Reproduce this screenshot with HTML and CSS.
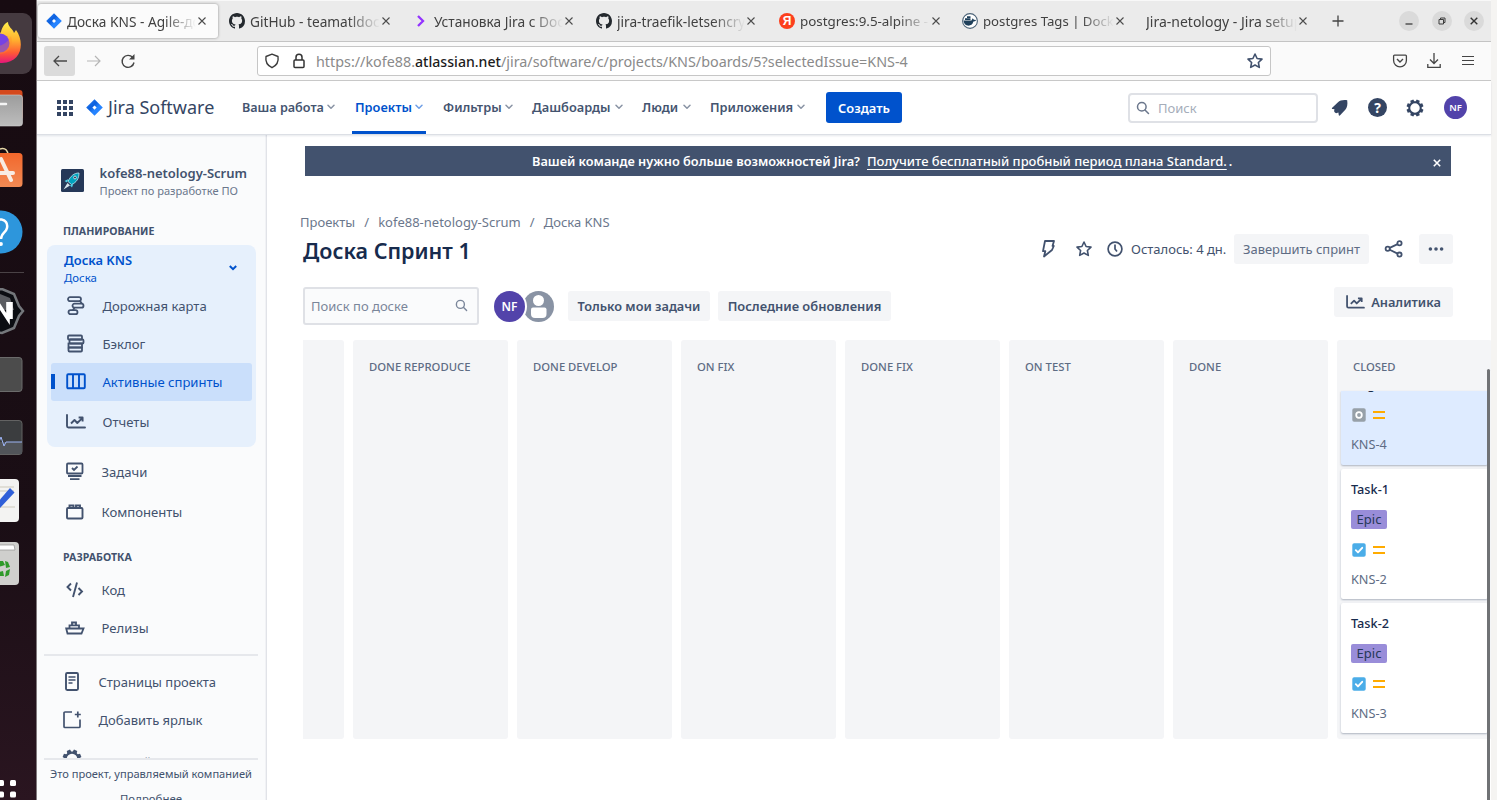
FILE: index.html
```html
<!DOCTYPE html>
<html lang="ru">
<head>
<meta charset="utf-8">
<title>Доска KNS - Agile-доска - Jira</title>
<link rel="stylesheet" href="styles.css">
</head>
<body>
<svg class="defs" width="0" height="0" aria-hidden="true">
  <defs>
    <linearGradient id="flame" x1="0" y1="0" x2="0" y2="1"><stop offset="0" stop-color="#fff04a"/><stop offset=".45" stop-color="#ffae2e"/><stop offset=".75" stop-color="#ff5a35"/><stop offset="1" stop-color="#e6157b"/></linearGradient>
    <linearGradient id="grey" x1="0" y1="0" x2="0" y2="1"><stop offset="0" stop-color="#9c9c9c"/><stop offset="1" stop-color="#bdbdbd"/></linearGradient>
    <linearGradient id="orange" x1="0" y1="0" x2="0" y2="1"><stop offset="0" stop-color="#f2672c"/><stop offset="1" stop-color="#f28a54"/></linearGradient>
    <linearGradient id="jira" x1="0" y1="0" x2="1" y2="1"><stop offset="0" stop-color="#2684ff"/><stop offset=".4" stop-color="#0d5fdc"/><stop offset=".6" stop-color="#2684ff"/></linearGradient>
  </defs>
  <symbol id="i-x" viewBox="0 0 10 10"><path d="M1.500 1.500l7 7M8.500 1.500l-7 7" fill="none" stroke="currentColor" stroke-width="1.100"/></symbol>
  <symbol id="i-down" viewBox="0 0 8 6"><path d="M1 1.200l3 3 3-3" fill="none" stroke="currentColor" stroke-width="1.500" stroke-linecap="round" stroke-linejoin="round"/></symbol>
  <symbol id="i-jira" viewBox="0 0 16 16"><path d="M8 .2L15.800 8 8 15.800.2 8z" fill="url(#jira)"/><path d="M8 6L10 8 8 10 6 8z" fill="#fff"/></symbol>
  <symbol id="i-github" viewBox="0 0 16 16"><path fill="#24292e" d="M8 0C3.580 0 0 3.580 0 8c0 3.540 2.290 6.530 5.470 7.590.4.070.55-.17.55-.38 0-.19-.01-.82-.01-1.490-2.010.37-2.530-.49-2.690-.94-.09-.23-.48-.94-.82-1.130-.28-.15-.68-.52-.01-.53.63-.01 1.080.58 1.230.82.72 1.210 1.870.87 2.330.66.070-.52.28-.87.51-1.070-1.780-.2-3.640-.89-3.640-3.950 0-.87.31-1.590.82-2.150-.08-.2-.36-1.020.08-2.120 0 0 .67-.21 2.200.82.64-.18 1.320-.27 2-.27s1.360.09 2 .27c1.530-1.040 2.200-.82 2.200-.82.44 1.100.16 1.920.08 2.120.51.56.82 1.270.82 2.150 0 3.070-1.870 3.750-3.650 3.950.29.25.54.73.54 1.480 0 1.070-.01 1.930-.01 2.200 0 .21.15.46.55.38A8.010 8.010 0 0 0 16 8c0-4.420-3.580-8-8-8z"/></symbol>
  <symbol id="i-search" viewBox="0 0 14 14"><circle cx="5.800" cy="5.800" r="4.300" fill="none" stroke="currentColor" stroke-width="1.500"/><path d="M9 9l3.500 3.500" stroke="currentColor" stroke-width="1.500" stroke-linecap="round"/></symbol>
  <symbol id="i-gear" viewBox="0 0 18 18"><circle cx="9" cy="9" r="5.700" fill="none" stroke="currentColor" stroke-width="1.900"/><g fill="currentColor"><path id="tooth" d="M7.400.5h3.200l.5 3H6.900z" transform="rotate(22.500 9 9)"/><use href="#tooth" transform="rotate(45 9 9)"/><use href="#tooth" transform="rotate(90 9 9)"/><use href="#tooth" transform="rotate(135 9 9)"/><use href="#tooth" transform="rotate(180 9 9)"/><use href="#tooth" transform="rotate(225 9 9)"/><use href="#tooth" transform="rotate(270 9 9)"/><use href="#tooth" transform="rotate(315 9 9)"/></g></symbol>
  <symbol id="i-star" viewBox="0 0 18 18"><path d="M9 2l2.100 4.500 4.900.6-3.600 3.400.9 4.900L9 13l-4.300 2.400.9-4.900L2 7.100l4.900-.6z" fill="none" stroke="currentColor" stroke-width="1.600" stroke-linejoin="round"/></symbol>
  <symbol id="i-chart" viewBox="0 0 20 16"><path d="M1 1v11a1.500 1.500 0 0 0 1.500 1.500H19" fill="none" stroke="currentColor" stroke-width="1.900" stroke-linecap="round"/><path d="M5 9.500L8.500 6l2.800 3L16 4.300M12.600 3.500h4v4" fill="none" stroke="currentColor" stroke-width="1.900" stroke-linejoin="round"/></symbol>
  <symbol id="i-done" viewBox="0 0 14 14"><rect x=".3" y=".3" width="13.400" height="13.400" rx="1.800" fill="#4bade8"/><path d="M3.800 7.200l2.200 2.200 4.200-4.600" fill="none" stroke="#fff" stroke-width="1.900" stroke-linecap="round" stroke-linejoin="round"/></symbol>
</svg>

<div class="screen">
  <aside class="dock">
    <svg class="d-fox" width="37" height="61" viewBox="0 0 37 61"><rect x="-20" y="0" width="52" height="61" rx="9" fill="#453a40"/><path d="M-14 31C-8 16 0 22 1 19 2 14 5 10 8 9c0 5 5 7 6 11l2-3c9 12 6 33-14 33S-18 40-14 31z" fill="url(#flame)"/><circle cx="0" cy="30" r="9.500" fill="#7542e5"/><path d="M-9 27c4 8 13 8 20-4 3 9-2 18-12 18z" fill="#ff8a2b" opacity=".3"/></svg>
    <svg class="d-files" width="37" height="38" viewBox="0 0 37 38"><rect x="-10" y="0" width="32.500" height="30" rx="3" fill="#d5491d"/><rect x="-10" y="5" width="32.500" height="31" rx="3" fill="url(#grey)" stroke="#d0d0d0" stroke-width=".6"/><path d="M-2 14H6" stroke="#f4f4f4" stroke-width="2.500" stroke-linecap="round"/></svg>
    <svg class="d-soft" width="37" height="42" viewBox="0 0 37 42"><path d="M-3 8C-3-.5 8-1 8 8" fill="none" stroke="#e6d8a8" stroke-width="1.500"/><rect x="-10" y="6" width="32.500" height="34" rx="3.500" fill="url(#orange)"/><path d="M1 12L11 33M-5 26H13" stroke="#f8ece4" stroke-width="4" stroke-linecap="round"/></svg>
    <svg class="d-help" width="37" height="44" viewBox="0 0 37 44"><circle cx="1" cy="22" r="21.500" fill="#2d96dc"/><path d="M-6 16C-5 6 9 8 7 18c-1 5-6 5-6 11" fill="none" stroke="#fff" stroke-width="2.500"/><circle cx="1" cy="34" r="1.900" fill="#fff"/></svg>
    <div class="d-line"></div>
    <svg class="d-hex" width="37" height="48" viewBox="0 0 37 48"><path d="M-8 2L2 1l12 5 5 12 4 5-4 5-5 12-12 5-10-1z" fill="#0b0d12" stroke="#74777b" stroke-width="2.500"/><path d="M0 6l10 4 4 12H0z" fill="#5a5c61"/><path d="M-3 14L8 31V14M11 14v17" fill="none" stroke="#fff" stroke-width="3.600"/></svg>
    <svg class="d-box" width="37" height="36" viewBox="0 0 37 36"><rect x="-10" y=".5" width="32" height="34" rx="3" fill="#4c4c4c" stroke="#6b6b6b"/></svg>
    <svg class="d-mon" width="37" height="36" viewBox="0 0 37 36"><rect x="-10" y=".5" width="32" height="34" rx="3" fill="#3b3d3f" stroke="#636363"/><path d="M-10 22H22V34H-10z" fill="#515459"/><path d="M-1 22l2-5 3 9 2-4h16" fill="none" stroke="#9db4f5" stroke-width="1"/></svg>
    <svg class="d-edit" width="37" height="44" viewBox="0 0 37 44"><rect x="-10" y="0" width="29" height="43" rx="4" fill="#f3f3f2"/><path d="M-1 8H14M-1 12H14M0 28H15" stroke="#cdc9bb"/><path d="M-3 24L10 9l4.500 4.500L0 29z" fill="#2f5fd8"/></svg>
    <svg class="d-trash" width="37" height="44" viewBox="0 0 37 44"><rect x="-10" y="0" width="29" height="43" rx="4" fill="#cfcfcd"/><path d="M-2 3H14L15 8H-2z" fill="#fff" stroke="#8f8f8f" stroke-width=".7"/><g fill="#2f9a2a"><path d="M-2 19h5l2 4-3 1-4 1zM5 19l3 1 2 5-4 1zM-1 30l4-1 1 5h-5zM6 29l4-2-1 6-4 2z"/></g></svg>
    <svg class="d-apps" width="37" height="22" viewBox="0 0 37 22"><g fill="#fff"><rect x="-2" y="1" width="6" height="6" rx="1.500"/><rect x="10" y="1" width="6" height="6" rx="1.500"/><rect x="-2" y="12.500" width="6" height="6" rx="1.500"/><rect x="10" y="12.500" width="6" height="6" rx="1.500"/></g></svg>
  </aside>

  <div class="browser">
    <div class="tabs">
      <div class="tab t1 active"><svg width="16" height="16"><use href="#i-jira"/></svg><span class="tt">Доска KNS - Agile-доска</span><svg class="x" width="10" height="10"><use href="#i-x"/></svg></div>
      <div class="tab t2"><svg width="16" height="16"><use href="#i-github"/></svg><span class="tt">GitHub - teamatldocker</span><svg class="x" width="10" height="10"><use href="#i-x"/></svg></div>
      <div class="tab t3"><svg width="16" height="16" viewBox="0 0 16 16"><path d="M5 3l5 5-5 5" fill="none" stroke="#9333ff" stroke-width="2.300"/></svg><span class="tt">Установка Jira с Docker</span><svg class="x" width="10" height="10"><use href="#i-x"/></svg></div>
      <div class="tab t4"><svg width="16" height="16"><use href="#i-github"/></svg><span class="tt">jira-traefik-letsencrypt</span><svg class="x" width="10" height="10"><use href="#i-x"/></svg></div>
      <div class="tab t5"><span class="ya">Я</span><span class="tt">postgres:9.5-alpine - D</span><svg class="x" width="10" height="10"><use href="#i-x"/></svg></div>
      <div class="tab t6"><svg width="16" height="16" viewBox="0 0 16 16"><circle cx="8" cy="8" r="7.400" fill="#fff" stroke="#4d6478" stroke-width="1.100"/><path d="M1.500 7.500h8l1.200-2.200 1.200 1.500 2.300.2c-1.200 1.500-2 1.600-2.800 1.600C10.500 12 8 13 5.500 12.600 3 12.200 1.700 10 1.500 7.500zM3 5.300h5.500v1.700H3zM5 3.300h3.500v1.700H5z" fill="#1f405b"/></svg><span class="tt">postgres Tags | Docker</span><svg class="x" width="10" height="10"><use href="#i-x"/></svg></div>
      <div class="tab t7"><span class="tt">Jira-netology - Jira setup</span><svg class="x" width="10" height="10"><use href="#i-x"/></svg></div>
      <svg class="plus" width="12" height="12" viewBox="0 0 12 12"><path d="M6 .5v11M.5 6h11" stroke="#444" stroke-width="1.300"/></svg>
      <div class="win"><svg width="20" height="20" viewBox="0 0 20 20"><path d="M6.500 13h7" stroke="#3d3d3d" stroke-width="1.300"/></svg></div>
      <div class="win"><svg width="20" height="20" viewBox="0 0 20 20"><path d="M7 8.500h4.500V13H7zM8.500 8V7H13v4.500h-1" fill="none" stroke="#3d3d3d"/></svg></div>
      <div class="win"><svg width="20" height="20" viewBox="0 0 20 20"><path d="M6.700 6.700l6.600 6.600M13.300 6.700l-6.600 6.600" stroke="#333" stroke-width="1.400"/></svg></div>
    </div>

    <div class="toolbar">
      <div class="back"><svg width="14" height="12" viewBox="0 0 14 12"><path d="M6 1L1 6l5 5M1 6h13" fill="none" stroke="#4a4a4a" stroke-width="1.300"/></svg></div>
      <svg class="fwd" width="14" height="12" viewBox="0 0 14 12"><path d="M8 1l5 5-5 5M13 6H0" fill="none" stroke="#b5b5b5" stroke-width="1.200"/></svg>
      <svg class="reload" width="16" height="16" viewBox="0 0 16 16"><path d="M14 9.500A6 6 0 1 1 12.700 4.500" fill="none" stroke="#444" stroke-width="1.400"/><path d="M14.500 1v5.500H9z" fill="#444"/></svg>
      <div class="url">
        <svg width="16" height="16" viewBox="0 0 16 16"><path d="M8 1.200l6 2.300c.8 5-1.500 9-6 11.200C3.500 12.500 1.200 8.500 2 3.500z" fill="none" stroke="#3c3c3c" stroke-width="1.400" stroke-linejoin="round"/></svg>
        <svg class="lock" width="14" height="16" viewBox="0 0 14 16"><rect x="2" y="7" width="10" height="7.500" rx="1" fill="none" stroke="#333" stroke-width="1.500"/><path d="M4 7V4.300a3 3 0 0 1 6 0V7" fill="none" stroke="#333" stroke-width="1.500"/></svg>
        <div class="addr"><span>https://kofe88.</span><b>atlassian.net</b><span>/jira/software/c/projects/KNS/boards/5?selectedIssue=KNS-4</span></div>
        <svg class="fav" width="18" height="18"><use href="#i-star"/></svg>
      </div>
      <svg class="pocket" width="16" height="16" viewBox="0 0 16 16"><path d="M2.500 2.200h11a.9.9 0 0 1 .9.9V7.500a6.400 6.400 0 0 1-12.800 0V3.100a.9.9 0 0 1 .9-.9z" fill="none" stroke="#444" stroke-width="1.300"/><path d="M5 6l3 3 3-3" fill="none" stroke="#444" stroke-width="1.400"/></svg>
      <svg class="dl" width="14" height="16" viewBox="0 0 14 16"><path d="M7 0v10M3 6.500l4 4 4-4M.8 11v3.300h12.400V11" fill="none" stroke="#444" stroke-width="1.300"/></svg>
      <svg class="menu" width="12" height="12" viewBox="0 0 12 12"><path d="M0 1.500h12M0 5.500h12M0 9.500h12" stroke="#444" stroke-width="1.200"/></svg>
    </div>

    <header class="top">
      <svg class="grid9" width="16" height="16" viewBox="0 0 16 16" fill="#344563"><path d="M0 0h4v4H0zM6 0h4v4H6zM12 0h4v4h-4zM0 6h4v4H0zM6 6h4v4H6zM12 6h4v4h-4zM0 12h4v4H0zM6 12h4v4H6zM12 12h4v4h-4z"/></svg>
      <svg class="logo" width="17" height="17"><use href="#i-jira"/></svg>
      <span class="brand">Jira Software</span>
      <nav class="nav">
        <a class="n1">Ваша работа<svg width="8" height="6"><use href="#i-down"/></svg></a>
        <a class="n2 on">Проекты<svg width="8" height="6"><use href="#i-down"/></svg></a>
        <a class="n3">Фильтры<svg width="8" height="6"><use href="#i-down"/></svg></a>
        <a class="n4">Дашбоарды<svg width="8" height="6"><use href="#i-down"/></svg></a>
        <a class="n5">Люди<svg width="8" height="6"><use href="#i-down"/></svg></a>
        <a class="n6">Приложения<svg width="8" height="6"><use href="#i-down"/></svg></a>
      </nav>
      <button class="create">Создать</button>
      <div class="search"><svg width="14" height="14"><use href="#i-search"/></svg>Поиск</div>
      <svg class="bell" width="18" height="18" viewBox="0 0 18 18"><path d="M16.200 1.300c-4-.6-7.400.2-9.200 2L1.200 8.700c-.7.700-.3 1.300.6 1.400l1.700.2c-.8 1.600-.3 3.400 1.600 4l2.300-.7.3 2.100c.1 1 .8 1.200 1.400.6l5.200-5.600c1.900-2 2.500-5.400 1.900-9.400z" fill="#344563"/></svg>
      <div class="help">?</div>
      <svg class="cog" width="18" height="18"><use href="#i-gear"/></svg>
      <div class="ava small">NF</div>
    </header>

    <div class="body">
      <aside class="side">
        <div class="scroll">
          <div class="proj">
            <svg width="23" height="23" viewBox="0 0 23 23"><rect width="23" height="23" rx="1.500" fill="#253858"/><path d="M18 4c-5 0-8.500 3-11 8.500L10.500 15.500C15.500 13.500 18 9.500 18 4z" fill="#00a3bf" stroke="#c1e9f2" stroke-width=".8"/><path d="M7.500 10l-4 2 2.500 1.500M12.500 14.500l-1.500 4L9 16.500z" fill="#4dd0e6"/><path d="M6.500 14l-4 6.500L9 16.500z" fill="#d5e4ec"/><circle cx="14" cy="8.500" r="1.400" fill="#253858" stroke="#fff" stroke-width=".7"/></svg>
            <div><div class="pname">kofe88-netology-Scrum</div><div class="psub">Проект по разработке ПО</div></div>
          </div>
          <h3 class="sec">ПЛАНИРОВАНИЕ</h3>
          <div class="group">
            <div class="ghead"><div><b>Доска KNS</b><span>Доска</span></div><svg width="10" height="8" viewBox="0 0 10 8"><path d="M1.800 2L5 5.200 8.200 2" fill="none" stroke="#0052cc" stroke-width="2"/></svg></div>
            <a class="item"><svg width="20" height="20" viewBox="0 0 20 20" fill="none" stroke="currentColor" stroke-width="1.800"><rect x="2" y="1.200" width="13" height="4" rx="2"/><rect x="6.500" y="7.700" width="11" height="4" rx="2"/><rect x="2.500" y="14.200" width="9" height="4" rx="2"/><path d="M14 5l2 2.700M8.500 11.500L7 14.200"/></svg>Дорожная карта</a>
            <a class="item"><svg width="20" height="20" viewBox="0 0 20 20" fill="none" stroke="currentColor" stroke-width="1.800"><rect x="2" y="1.500" width="14" height="4" rx="1"/><rect x="3.500" y="5.500" width="14" height="4" rx="1"/><rect x="2.500" y="9.500" width="13.500" height="4"/><rect x="2.500" y="13.500" width="13.500" height="4" rx="1"/></svg>Бэклог</a>
            <a class="item sel"><svg width="20" height="20" viewBox="0 0 20 20" fill="none" stroke="currentColor" stroke-width="1.900"><rect x="1.200" y="2.300" width="17.600" height="14" rx="1"/><path d="M7 2.500v14M13 2.500v14"/></svg>Активные спринты</a>
            <a class="item rep"><svg width="20" height="16"><use href="#i-chart"/></svg>Отчеты</a>
          </div>
          <a class="item out tasks"><svg width="20" height="20" viewBox="0 0 20 20" fill="none" stroke="currentColor" stroke-width="1.800"><rect x="2" y="1.500" width="15.500" height="10" rx="1"/><path d="M7 6l2 2L12.500 4.500M3 14h13.500M5 17.200h9.500"/></svg>Задачи</a>
          <a class="item out comp"><svg width="20" height="20" viewBox="0 0 20 20" fill="none" stroke="currentColor" stroke-width="1.900"><rect x="2" y="6" width="15.500" height="10.500" rx="1"/><path d="M4.500 6V3.500h4V6M11 6V3.500h4V6"/></svg>Компоненты</a>
          <h3 class="sec dev">РАЗРАБОТКА</h3>
          <a class="item out"><svg width="20" height="20" viewBox="0 0 20 20" fill="none" stroke="currentColor" stroke-width="1.900"><path d="M6 3.500L2.500 7 6 10.500M13.500 8l3.500 3.500-3.500 3.500M12 2.500L8 17"/></svg>Код</a>
          <a class="item out"><svg width="20" height="20" viewBox="0 0 20 20" fill="none" stroke="currentColor" stroke-width="1.800"><path d="M1.200 10.500h17.300l-2 5H2.500zM4.500 10V7.300h9.500V10M7 7V4.500h4V7"/></svg>Релизы</a>
          <div class="rule"></div>
          <a class="item out pg"><svg width="20" height="20" viewBox="0 0 20 20" fill="none" stroke="currentColor" stroke-width="1.900"><rect x="4" y="1" width="12" height="17" rx="1.200"/><path d="M6.500 5h7M6.500 8h7M6.500 11h4" stroke-width="1.600"/></svg>Страницы проекта</a>
          <a class="item out pg"><svg width="20" height="20" viewBox="0 0 20 20" fill="none" stroke="currentColor" stroke-width="1.700"><path d="M10 2H3a1 1 0 0 0-1 1V16.500a1 1 0 0 0 1 1h14a1 1 0 0 0 1-1V9.500M15.800 1.500v6M12.800 4.500h6"/></svg>Добавить ярлык</a>
          <a class="item out pg set"><svg width="20" height="20" viewBox="0 0 18 18"><use href="#i-gear"/></svg><span>Настройки проекта</span></a>
        </div>
        <div class="foot"><div>Это проект, управляемый компанией</div><div class="more">Подробнее</div></div>
      </aside>

      <main class="main">
        <div class="banner"><span class="b1">Вашей команде нужно больше возможностей Jira?</span><a>Получите бесплатный пробный период плана Standard.</a><span class="dot">.</span><svg width="10" height="10" viewBox="0 0 10 10"><path d="M1.800 1.800l6.400 6.400M8.200 1.800l-6.400 6.400" stroke="#fff" stroke-width="1.600"/></svg></div>
        <div class="crumbs"><span class="c1">Проекты</span><i>/</i><span class="c2">kofe88-netology-Scrum</span><i>/</i><span>Доска KNS</span></div>
        <div class="titlebar">
          <h1>Доска Спринт 1</h1>
          <svg class="bolt" width="16" height="20" viewBox="0 0 16 20"><path d="M5 2h9l-1.500 5h1.300L12 11 4 17.500l1.300-5.300H3z" fill="none" stroke="currentColor" stroke-width="1.800" stroke-linejoin="round"/></svg>
          <svg class="star" width="18" height="18"><use href="#i-star"/></svg>
          <svg class="clock" width="16" height="16" viewBox="0 0 16 16" fill="none" stroke="currentColor" stroke-width="1.700"><circle cx="8" cy="8" r="6.900"/><path d="M8 3.500V8l2 2.500"/></svg>
          <span class="left">Осталось: 4 дн.</span>
          <button class="btn finish">Завершить спринт</button>
          <svg class="share" width="20" height="18" viewBox="0 0 20 18" fill="none" stroke="currentColor" stroke-width="1.800"><circle cx="3.700" cy="8.800" r="2.100"/><circle cx="15.500" cy="3.200" r="2.100"/><circle cx="15.500" cy="14.600" r="2.100"/><path d="M5.700 7.900l7.900-3.800M5.700 9.800l7.900 3.800"/></svg>
          <button class="btn dots"><svg width="16" height="6" viewBox="0 0 16 6" fill="#44546f"><circle cx="2.400" cy="3" r="1.800"/><circle cx="8" cy="3" r="1.800"/><circle cx="13.600" cy="3" r="1.800"/></svg></button>
        </div>
        <div class="filters">
          <div class="find">Поиск по доске<svg width="13" height="13" viewBox="0 0 14 14"><use href="#i-search"/></svg></div>
          <div class="ava big">NF</div>
          <svg class="anon" width="31" height="31" viewBox="0 0 31 31"><circle cx="15.500" cy="15.500" r="15.500" fill="#8993a4"/><circle cx="15.500" cy="9.500" r="5.500" fill="#fff"/><path d="M8 18.500a2 2 0 0 1 2-2h11.500a2 2 0 0 1 2 2V23a4 4 0 0 1-4 4H12a4 4 0 0 1-4-4z" fill="#fff"/></svg>
          <button class="btn mine">Только мои задачи</button>
          <button class="btn recent">Последние обновления</button>
          <button class="btn stats"><svg width="19" height="15"><use href="#i-chart"/></svg>Аналитика</button>
        </div>
        <div class="board">
          <section class="col first"></section>
          <section class="col"><h2>DONE REPRODUCE</h2></section>
          <section class="col"><h2>DONE DEVELOP</h2></section>
          <section class="col"><h2>ON FIX</h2></section>
          <section class="col"><h2>DONE FIX</h2></section>
          <section class="col"><h2>ON TEST</h2></section>
          <section class="col"><h2>DONE</h2></section>
          <section class="col"><h2>CLOSED</h2>
            <div class="cards">
              <article class="card cut"><div class="ct">Bug</div><div class="ic"><svg width="14" height="14" viewBox="0 0 14 14"><rect x=".3" y=".3" width="13.400" height="13.400" rx="1.800" fill="#97a0a8"/><circle cx="7" cy="7" r="2.800" fill="none" stroke="#fff" stroke-width="1.800"/></svg><span class="prio"></span></div><div class="key">KNS-4</div></article>
              <article class="card"><div class="ct">Task-1</div><span class="epic">Epic</span><div class="ic"><svg width="14" height="14"><use href="#i-done"/></svg><span class="prio"></span></div><div class="key">KNS-2</div></article>
              <article class="card"><div class="ct">Task-2</div><span class="epic">Epic</span><div class="ic"><svg width="14" height="14"><use href="#i-done"/></svg><span class="prio"></span></div><div class="key">KNS-3</div></article>
            </div>
          </section>
        </div>
        <div class="thumb"></div>
      </main>
    </div>
  </div>
</div>
</body>
</html>
```

FILE: styles.css
```css
* { box-sizing: border-box; }
body { margin: 0; font-family: "Noto Sans", sans-serif; font-size: 13px; color: #42526e; }
svg { display: block; flex: none; }
.defs { position: absolute; }
h1, h2, h3 { margin: 0; }
button { font: inherit; color: inherit; border: 0; padding: 0; margin: 0; }
.screen { display: flex; width: 1497px; height: 800px; overflow: hidden; background: #f5f4f2; white-space: nowrap; }

/* launcher */
.dock { width: 37px; flex: none; display: flex; flex-direction: column; background: linear-gradient(#170b11 0, #1a0e15 65%, #2a1520); border-right: 1px solid #807a7d; overflow: hidden; }
.d-fox { margin-top: 13px; }
.d-files { margin-top: 16px; }
.d-soft { margin-top: 19px; }
.d-help { margin-top: 21px; }
.d-line { width: 24px; height: 1px; flex: none; margin-top: 18px; background: #4a4246; }
.d-hex { margin-top: 15px; }
.d-box { margin-top: 21px; }
.d-mon { margin-top: 27px; }
.d-edit { margin-top: 23px; }
.d-trash { margin-top: 19px; }
.d-apps { margin-top: 193px; }

/* browser frame */
.browser { width: 1454px; flex: none; display: flex; flex-direction: column; background: #fff; }
.tabs { height: 42px; flex: none; display: flex; align-items: center; background: #ebebeb; border-top: 1px solid #f8f8f8; border-bottom: 1px solid #c4c4c4; color: #414141; font-size: 13.7px; }
.tab { height: 34px; display: flex; align-items: center; padding-left: 8px; }
.tab.active { background: #fbfbfb; border-radius: 3px; box-shadow: 0 0 3px rgba(0,0,0,.4); }
.tt { flex: 1; min-width: 0; overflow: hidden; margin-left: 5px; -webkit-mask-image: linear-gradient(to right, #000 calc(100% - 32px), transparent); mask-image: linear-gradient(to right, #000 calc(100% - 32px), transparent); }
.x { margin: 0 11px 0 1px; color: #4c4c4c; }
.t1 { width: 180px; margin-left: 1px; }
.t2 { width: 184px; padding-left: 11px; }
.t3 { width: 183px; padding-left: 11px; }
.t4 { width: 182px; padding-left: 11px; }
.t4 .tt { margin-left: 5px; }
.t5 { width: 185px; padding-left: 12px; font-size: 13.4px; }
.t6 { width: 184px; padding-left: 10px; font-size: 13.2px; }
.t7 { width: 183px; padding-left: 10px; font-size: 14px; }
.t7 .tt { margin: 0; }
.ya { width: 16px; height: 16px; border-radius: 8px; background: #fc3f1d; color: #fff; font: 700 12px/16px "Liberation Sans", sans-serif; text-align: center; }
.plus { margin: 0 55px 0 13px; }
.win { width: 20px; height: 20px; border-radius: 10px; background: #dadada; margin-right: 12.5px; }
.toolbar { height: 39px; flex: none; display: flex; align-items: center; background: #fafafa; border-bottom: 1px solid #c9c9c9; }
.back { width: 31px; height: 30px; margin-left: 7px; border-radius: 3px; background: #dbdbdb; display: flex; align-items: center; justify-content: center; }
.fwd { margin-left: 12px; }
.reload { margin-left: 19px; }
.url { width: 1014px; height: 30px; margin-left: 121px; border: 1px solid #c6c6c6; border-radius: 3px; background: #fff; display: flex; align-items: center; padding: 0 6px; }
.lock { margin-left: 12px; }
.addr { margin-left: 10px; flex: 1; font-size: 14.35px; color: #8a8a8a; }
.addr b { font-weight: 500; font-size: 14.1px; color: #1c1c1c; }
.pocket { margin-left: 121px; }
.dl { margin-left: 19px; }
.menu { margin-left: 21px; }

/* product header */
.top { height: 54px; flex: none; display: flex; align-items: center; background: #fff; border-bottom: 1px solid #dcdfe5; box-shadow: 0 1px 2px rgba(9,30,66,.1); z-index: 1; }
.grid9 { margin-left: 20px; }
.logo { margin-left: 13px; }
.brand { width: 108px; margin-left: 5px; font-size: 18px; line-height: 24px; color: #344563; padding-bottom: 1px; }
.nav { display: flex; height: 54px; margin-left: 23px; font-size: 12.8px; font-weight: 600; color: #44546f; }
.nav a { height: 53px; display: flex; align-items: center; padding: 0 3px; }
.nav svg { margin-left: auto; color: #8993a4; }
.nav .n1 { width: 99px; font-size: 12.6px; }
.nav .n2 { width: 74px; margin-left: 14px; }
.nav .n3 { width: 76px; margin-left: 14px; }
.nav .n4 { width: 97px; margin-left: 13px; }
.nav .n5 { width: 55px; margin-left: 13px; }
.nav .n6 { width: 101px; margin-left: 13px; }
.nav .on { color: #0052cc; box-shadow: inset 0 -3px #0052cc; }
.nav .on svg { color: #6f9fe6; }
.create { width: 76px; height: 31px; margin-left: 18px; border-radius: 3px; background: #0052cc; color: #fff; font-size: 12.9px; font-weight: 600; }
.search { width: 190px; height: 30px; margin-left: 226px; border: 2px solid #dfe1e6; border-radius: 4px; display: flex; align-items: center; padding-left: 6px; gap: 8px; color: #a5adba; }
.search svg { color: #6b778c; }
.bell { margin-left: 13px; }
.help { width: 19px; height: 19px; margin-left: 19px; border-radius: 10px; background: #344563; color: #fff; font-weight: 700; font-size: 14px; line-height: 19px; text-align: center; }
.cog { margin-left: 19px; color: #344563; }
.ava { border-radius: 50%; background: #5243aa; color: #fff; display: flex; align-items: center; justify-content: center; flex: none; font-weight: 600; }
.ava.small { width: 23px; height: 23px; margin-left: 20px; font-size: 9.5px; }

/* sidebar */
.body { flex: 1; display: flex; min-height: 0; }
.side { width: 230px; flex: none; background: #fafbfc; border-right: 1px solid #e1e3e8; box-shadow: inset -1px 0 #f1f2f5; display: flex; flex-direction: column; }
.scroll { height: 623px; overflow: hidden; flex: none; }
.proj { display: flex; margin: 29px 0 0 24px; }
.proj > svg { margin-top: 5px; }
.proj > div { margin-left: 15.5px; }
.pname { font-size: 13px; line-height: 19px; font-weight: 600; color: #42526e; }
.psub { font-size: 11.1px; line-height: 16px; color: #6b778c; }
.sec { margin: 25px 0 0 26px; font-size: 10.6px; line-height: 14px; font-weight: 700; color: #42526e; }
.group { width: 209px; height: 202px; margin: 7px 0 0 10px; border-radius: 8px; background: #e6f0fc; padding: 4px 4px 0; }
.ghead { height: 37px; margin-bottom: 1px; display: flex; align-items: center; padding: 0 14px 0 13px; color: #0052cc; justify-content: space-between; }
.ghead > div { display: flex; flex-direction: column; }
.ghead b { font-size: 12.9px; line-height: 20px; font-weight: 600; }
.ghead span { font-size: 11.4px; line-height: 16px; }
.item { height: 38px; display: flex; align-items: center; padding-left: 14.5px; gap: 17px; font-size: 13.1px; color: #42526e; border-radius: 3px; }
.item.sel { background: #cadffb linear-gradient(#0052cc, #0052cc) 0 11px / 4px 15px no-repeat; color: #0052cc; }
.rep { margin-top: 2px; }
.item.out { padding-left: 27.5px; }
.tasks { margin-top: 6px; }
.comp { margin-top: 2px; }
.sec.dev { margin-top: 19px; margin-bottom: 7px; }
.rule { width: 214px; height: 2px; margin: 7px 0 7px 7px; background: #e6e8ec; }
.item.out.pg { padding-left: 25px; gap: 16.5px; font-size: 13px; }
.set svg { margin-top: 2px; }
.set span { margin-top: 8px; }
.foot { margin-left: 7px; width: 214px; border-top: 2px solid #e6e8ec; text-align: center; font-size: 11.1px; line-height: 16px; padding-top: 6px; }
.more { margin-top: 9px; font-size: 11.4px; }

/* board page */
.main { position: relative; flex: 1; min-width: 0; overflow: hidden; background: #fff; }
.banner { width: 1146px; height: 30px; margin: 11px 0 0 38px; background: #42526e; color: #fff; display: flex; align-items: center; font-size: 12.76px; font-weight: 600; padding-left: 227px; }
.b1 { width: 335px; }
.banner a { text-decoration: underline; text-underline-offset: 3px; font-weight: 500; font-size: 12.97px; }
.dot { margin-left: 2px; }
.banner svg { margin: 3px 9px 0 auto; }
.crumbs { display: flex; margin: 36px 0 0 33px; line-height: 20px; color: #6b778c; }
.crumbs i { font-style: normal; width: 23px; text-align: center; }
.titlebar { height: 30px; margin: 2px 38px 0 36px; display: flex; align-items: center; color: #42526e; }
h1 { font-size: 21.5px; line-height: 30px; font-weight: 600; color: #172b4d; width: 737px; margin-top: 4px; }
.star { margin-left: 19px; }
.clock { margin-left: 14px; }
.left { margin-left: 8px; width: 103px; }
.btn { height: 30px; border-radius: 3px; background: #f4f5f7; flex: none; display: flex; align-items: center; justify-content: center; font-weight: 600; font-size: 12.8px; color: #42526e; }
.finish { width: 135px; font-weight: 400; font-size: 12.95px; color: #5e6c84; }
.share { margin: 0 15px 0 15px; }
.dots { width: 34px; }
.filters { display: flex; align-items: center; height: 38px; margin: 23px 38px 0 36px; }
.find { width: 176px; height: 38px; border: 2px solid #dfe1e6; border-radius: 3px; background: #fafbfc; display: flex; align-items: center; justify-content: space-between; padding: 0 9px 0 6px; color: #7a869a; }
.find svg { margin-bottom: 2px; }
.ava.big { width: 31px; height: 31px; margin-left: 15px; font-size: 12px; box-shadow: 0 0 0 2px #fff; z-index: 1; }
.anon { margin-left: -2px; }
.mine { width: 142px; margin-left: 14px; font-size: 12.73px; }
.recent { width: 173px; margin-left: 8px; font-size: 12.9px; }
.stats { width: 119px; margin-left: auto; margin-bottom: 8px; gap: 6px; }
.board { display: flex; gap: 9.5px; margin: 15px 0 0 36px; }
.col { width: 154.5px; height: 399px; flex: none; border-radius: 3px; background: #f4f5f7; }
.col.first { width: 40.5px; border-radius: 0 3px 3px 0; }
.col h2 { margin: 18px 0 0 16px; font-size: 11.3px; line-height: 18px; font-weight: 500; color: #5e6c84; }
.cards { margin: 15px 4px 0; display: flex; flex-direction: column; gap: 4px; }
.card { height: 130px; border-radius: 2px; background: #fff; box-shadow: 0 1px 2px rgba(9,30,66,.3); padding: 10px 10px 0; }
.card.cut { height: 74px; background: #deebff; overflow: hidden; padding-top: 0; border-radius: 0 0 2px 2px; }
.cut .ct { margin-top: -17px; }
.ct { font-size: 12.7px; line-height: 20px; color: #172b4d; font-weight: 500; }
.epic { display: block; width: 36px; height: 19px; margin-top: 11px; border-radius: 2px; background: #998dd9; color: #253858; line-height: 19px; text-align: center; }
.ic { height: 14px; margin: 14px 0 0 .5px; display: flex; align-items: center; gap: 7px; }
.cut .ic { margin-top: 14px; }
.prio { width: 12px; height: 8px; border: solid #ffab00; border-width: 2px 0; }
.key { margin-top: 12px; line-height: 20px; font-size: 12.7px; color: #5e6c84; }
.thumb { position: absolute; right: 1px; top: 234px; width: 3px; height: 440px; background: #707275; border-radius: 2px 2px 0 0; }
```
